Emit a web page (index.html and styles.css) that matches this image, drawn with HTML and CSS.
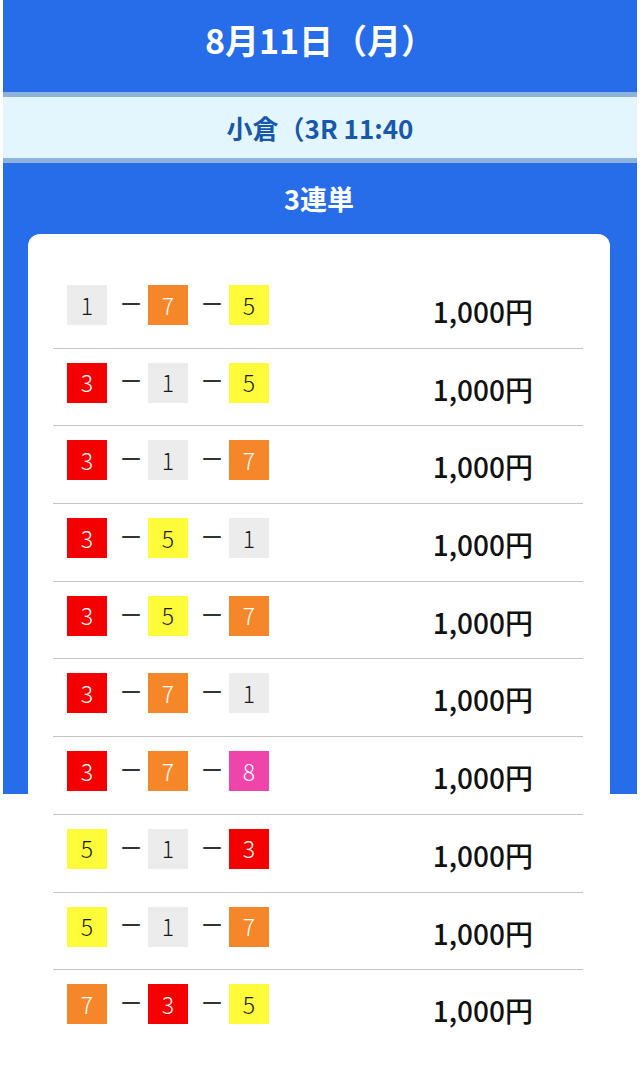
FILE: index.html
```html
<!DOCTYPE html>
<html lang="ja">
<head>
<meta charset="utf-8">
<title>3連単</title>
<link rel="stylesheet" href="styles.css">
</head>
<body>
<div class="page">
  <header class="date-bar">8月11日（月）</header>
  <div class="race-bar">小倉（3R 11:40</div>
  <section class="main">
    <h2 class="bet-type">3連単</h2>
    <div class="card">
      <div class="row"><div class="combo"><span class="num c1">1</span><span class="dash">ー</span><span class="num c7">7</span><span class="dash">ー</span><span class="num c5">5</span></div><div class="amount">1,000円</div></div>
      <div class="row"><div class="combo"><span class="num c3">3</span><span class="dash">ー</span><span class="num c1">1</span><span class="dash">ー</span><span class="num c5">5</span></div><div class="amount">1,000円</div></div>
      <div class="row"><div class="combo"><span class="num c3">3</span><span class="dash">ー</span><span class="num c1">1</span><span class="dash">ー</span><span class="num c7">7</span></div><div class="amount">1,000円</div></div>
      <div class="row"><div class="combo"><span class="num c3">3</span><span class="dash">ー</span><span class="num c5">5</span><span class="dash">ー</span><span class="num c1">1</span></div><div class="amount">1,000円</div></div>
      <div class="row"><div class="combo"><span class="num c3">3</span><span class="dash">ー</span><span class="num c5">5</span><span class="dash">ー</span><span class="num c7">7</span></div><div class="amount">1,000円</div></div>
      <div class="row"><div class="combo"><span class="num c3">3</span><span class="dash">ー</span><span class="num c7">7</span><span class="dash">ー</span><span class="num c1">1</span></div><div class="amount">1,000円</div></div>
      <div class="row"><div class="combo"><span class="num c3">3</span><span class="dash">ー</span><span class="num c7">7</span><span class="dash">ー</span><span class="num c8">8</span></div><div class="amount">1,000円</div></div>
      <div class="row"><div class="combo"><span class="num c5">5</span><span class="dash">ー</span><span class="num c1">1</span><span class="dash">ー</span><span class="num c3">3</span></div><div class="amount">1,000円</div></div>
      <div class="row"><div class="combo"><span class="num c5">5</span><span class="dash">ー</span><span class="num c1">1</span><span class="dash">ー</span><span class="num c7">7</span></div><div class="amount">1,000円</div></div>
      <div class="row last"><div class="combo"><span class="num c7">7</span><span class="dash">ー</span><span class="num c3">3</span><span class="dash">ー</span><span class="num c5">5</span></div><div class="amount">1,000円</div></div>
    </div>
  </section>
</div>
</body>
</html>
```
FILE: styles.css
```css
* { box-sizing: border-box; }
html, body {
  margin: 0;
  padding: 0;
  background: #ffffff;
}
body {
  font-family: "Noto Sans CJK JP", "Noto Sans", sans-serif;
  color: #111;
}
.page {
  margin: 0 3px;
}
.date-bar {
  height: 92px;
  background: #276ce9;
  color: #fff;
  font-size: 34px;
  font-weight: 700;
  display: flex;
  align-items: center;
  justify-content: center;
  padding-bottom: 14px;
}
.race-bar {
  height: 71px;
  background: #e4f6fd;
  border-top: 5px solid #8db3dd;
  border-bottom: 5px solid #8db3dd;
  color: #1858aa;
  font-size: 26px;
  font-weight: 700;
  display: flex;
  align-items: center;
  justify-content: center;
}
.main {
  background: linear-gradient(#276ce9, #276ce9) top left / 100% 631px no-repeat;
  padding: 18px 27px 0 25px;
}
.bet-type {
  margin: 0;
  color: #fff;
  font-size: 27px;
  font-weight: 700;
  text-align: center;
  line-height: 36px;
  height: 36px;
}
.card {
  margin-top: 17px;
  background: #fff;
  border-radius: 12px;
  padding: 37px 27px 20px 25px;
}
.row {
  display: flex;
  align-items: flex-end;
  justify-content: space-between;
  padding: 14px 50px 22.7px 14px;
  border-bottom: 1px solid #c4c4c4;
}
.row.last {
  border-bottom: none;
}
.combo {
  display: flex;
  align-items: center;
}
.num {
  width: 40px;
  height: 40px;
  display: flex;
  align-items: center;
  justify-content: center;
  font-size: 23px;
  font-weight: 300;
  line-height: 1;
  color: #1a1a1a;
}
.c1 { background: #ececec; }
.c3 { background: #f50000; color: #fff; }
.c5 { background: #fdfb3a; }
.c7 { background: #f5872a; color: #fff; }
.c8 { background: #ef45ab; color: #fff; }
.dash {
  width: 18px;
  margin: 0 8px 6px 15px;
  font-size: 22px;
  line-height: 1.2;
  color: #333;
  display: flex;
  justify-content: center;
}
.amount {
  font-size: 28px;
  font-weight: 500;
  line-height: 1;
  color: #111;
  margin-bottom: 0;
}
```
